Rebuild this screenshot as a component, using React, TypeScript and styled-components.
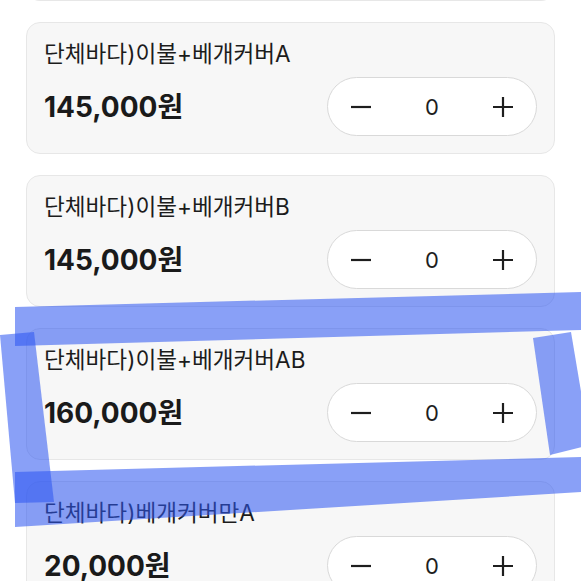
import React from "react";
import styled, { createGlobalStyle } from "styled-components";

const Global = createGlobalStyle`
  html, body { margin: 0; padding: 0; background: #ffffff; overflow: hidden; }
  body { font-family: Inter, "Noto Sans CJK KR", sans-serif; color: #1b1b1b; }
`;

const Page = styled.div`
  position: relative;
  width: 581px;
  height: 581px;
  overflow: hidden;
  background: #ffffff;
`;

const List = styled.div`
  display: flex;
  flex-direction: column;
  gap: 21px;
  padding: 0 26px;
  margin-top: -20px;
`;

const CardTail = styled.div`
  box-sizing: border-box;
  height: 21px;
  background: #f7f7f7;
  border: 1px solid #e7e7e7;
  border-top: none;
  border-radius: 0 0 14px 14px;
`;

const Card = styled.div`
  box-sizing: border-box;
  height: 132px;
  background: #f7f7f7;
  border: 1px solid #e7e7e7;
  border-radius: 14px;
  padding: 17px;
  display: flex;
  flex-direction: column;
  gap: 9px;
`;

const Title = styled.div`
  font-family: Inter, "Noto Sans CJK KR", sans-serif;
  font-size: 22.6px;
  line-height: 28px;
  font-weight: 400;
  color: #1c1c1c;
`;

const Row = styled.div`
  display: flex;
  align-items: center;
  justify-content: space-between;
`;

const Price = styled.div`
  font-family: Inter, "Noto Sans CJK KR", sans-serif;
  font-size: 28px;
  line-height: 34px;
  font-weight: 700;
  color: #1a1a1a;
`;

const Stepper = styled.div`
  box-sizing: border-box;
  width: 210px;
  height: 59px;
  border: 1px solid #d9d9d9;
  border-radius: 30px;
  background: #ffffff;
  display: grid;
  grid-template-columns: 66px 1fr 66px;
  align-items: center;
`;

const StepBtn = styled.span`
  display: flex;
  align-items: center;
  justify-content: center;
  color: #1e1e1e;
`;

const Count = styled.span`
  text-align: center;
  font-family: Inter, sans-serif;
  font-size: 22px;
  color: #1e1e1e;
`;

const Overlay = styled.svg`
  position: absolute;
  left: 0;
  top: 0;
  pointer-events: none;
`;

const Minus = () => (
  <svg width="22" height="22" viewBox="0 0 22 22">
    <path d="M1 11h20" stroke="currentColor" strokeWidth="2.2" />
  </svg>
);
const Plus = () => (
  <svg width="22" height="22" viewBox="0 0 22 22">
    <path d="M1 11h20M11 1v20" stroke="currentColor" strokeWidth="2.2" />
  </svg>
);

const items = [
  { title: "단체바다)이불+베개커버A", price: "145,000원" },
  { title: "단체바다)이불+베개커버B", price: "145,000원" },
  { title: "단체바다)이불+베개커버AB", price: "160,000원" },
  { title: "단체바다)베개커버만A", price: "20,000원" },
];

export default function App() {
  return (
    <Page>
      <Global />
      <List>
        <CardTail />
        {items.map((it, i) => (
          <Card key={i}>
            <Title>{it.title}</Title>
            <Row>
              <Price>{it.price}</Price>
              <Stepper>
                <StepBtn><Minus /></StepBtn>
                <Count>0</Count>
                <StepBtn><Plus /></StepBtn>
              </Stepper>
            </Row>
          </Card>
        ))}
      </List>
      <Overlay width="581" height="581" viewBox="0 0 581 581">
        <g fill="rgb(45,85,240)" fillOpacity="0.56">
          <polygon points="15,307 581,292 581,330 15,346" />
          <polygon points="0,335 34,332 54,502 15,503" />
          <polygon points="15,472 581,457 581,492 15,527" />
          <polygon points="533,338 571,332 590,445 550,455" />
        </g>
      </Overlay>
    </Page>
  );
}
